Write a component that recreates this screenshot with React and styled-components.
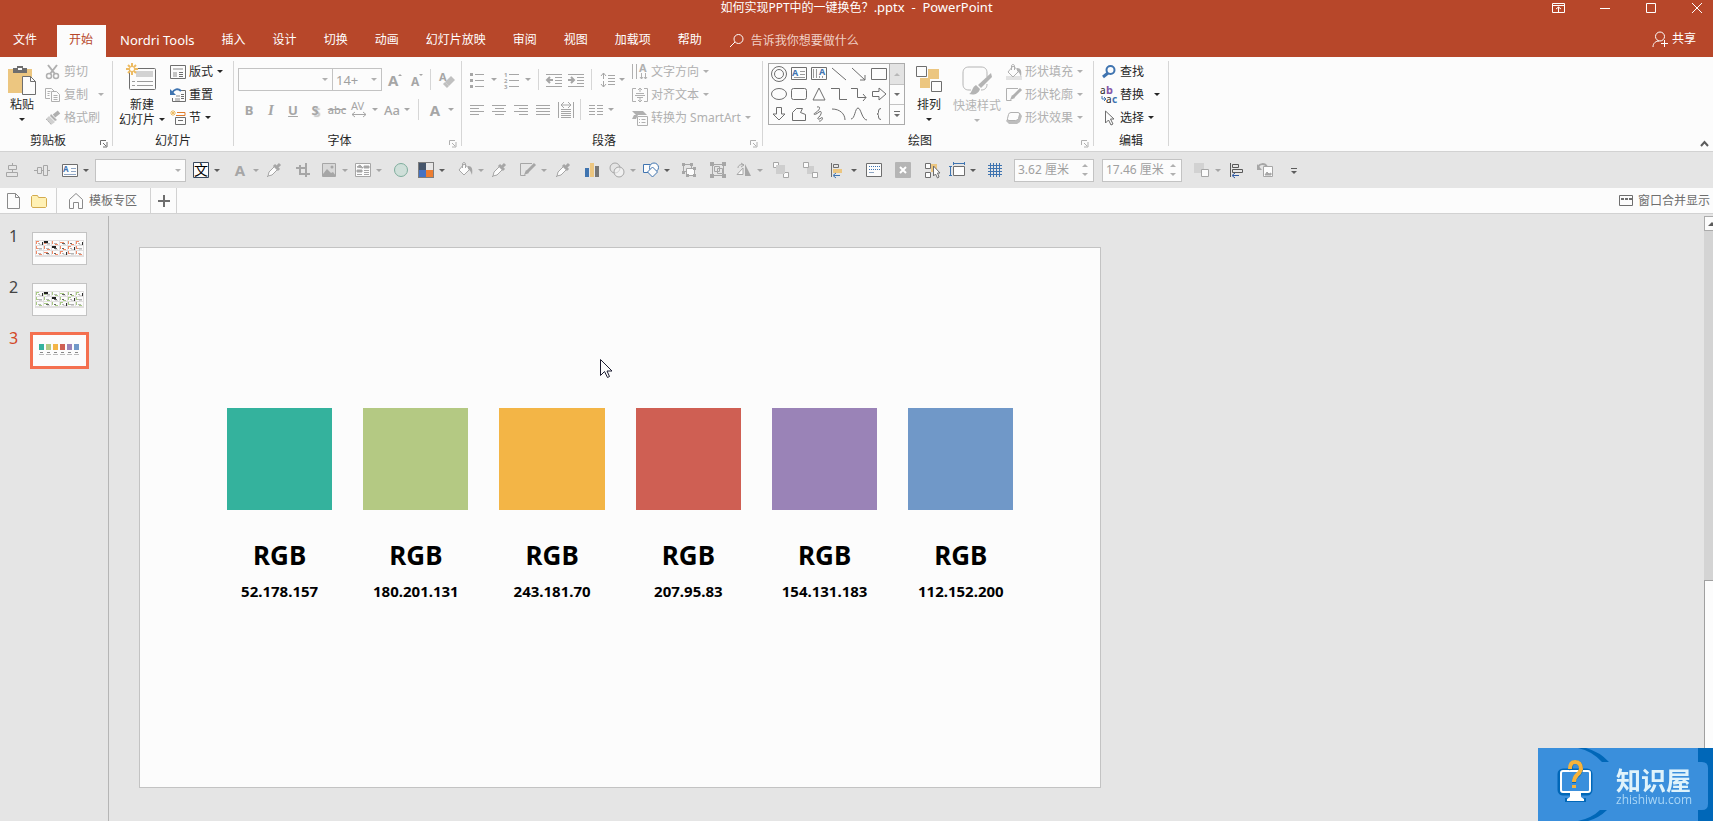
import React from 'react';
import styled, {createGlobalStyle} from 'styled-components';

const GlobalStyle = createGlobalStyle`
*{box-sizing:border-box;}
body{
    margin:0;
    overflow:hidden;
    background:#e5e5e5;
    font-family:"Noto Sans","Noto Sans CJK SC",sans-serif;
    font-size:12px;
    line-height:16px;
    color:#262626;
}
button,input,select{
    font:inherit;
    color:inherit;
    background:none;
    border:0;
    padding:0;
    margin:0;
}
svg{display:block;flex:none;overflow:visible;}
`;

/* ---------- icons ---------- */

const Icon = ({w = 16, h = 16, children}) => (
    <svg width={w} height={h} viewBox={`0 0 ${w} ${h}`} fill="none" stroke="currentColor" aria-hidden="true">{children}</svg>
);

const Caret = () => <svg width="6" height="3" viewBox="0 0 6 3" fill="currentColor" aria-hidden="true"><path d="M0 0h6L3 3z"/></svg>;

const T = ({x, y, s = 8, b = true, fill = 'currentColor', children}) => (
    <text x={x} y={y} fontSize={s} fontWeight={b ? 700 : 400} fill={fill} stroke="none">{children}</text>
);

const blue = '#3f74b0';
const sand = '#ecc680';
const line = '#6e6e6e';

const Star = () => <path d="M6 0v12M0 6h12M2 2l8 8M10 2l-8 8" stroke="#edbb62" strokeWidth="2"/>;

const PasteIcon = () => (
    <Icon w={29} h={31}>
        <path d="M0 4h24v24H0z" fill={sand} stroke="none"/>
        <path d="M5 3h4V1h6v2h4v5H5z" fill="#6e6e6e" stroke="none"/>
        <path d="M10 3h4v2h-4z" fill="#fcfcfc" stroke="none"/>
        <path d="M14.500 11.500h8l5 5v13h-13z" fill="#fcfcfc" stroke={line}/>
        <path d="M22.500 11.500v5h5" stroke={line}/>
    </Icon>
);
const CutIcon = () => (
    <Icon>
        <path d="M3 1l7 9M12 1L5 10" strokeWidth="2"/>
        <circle cx="4" cy="12" r="2.500" strokeWidth="1.500"/><circle cx="11" cy="12" r="2.500" strokeWidth="1.500"/>
    </Icon>
);
const CopyIcon = () => (
    <Icon>
        <path d="M5 11.500H.500v-10h6l3 3" /><path d="M2.500 4.500h3M2.500 6.500h2M2.500 8.500h2"/>
        <path d="M6.500 4.500h5l3 3v7h-8z"/><path d="M8.500 8.500h4M8.500 10.500h4M8.500 12.500h4"/>
    </Icon>
);
const BrushIcon = () => (
    <Icon>
        <path d="M14 2l-5 4" strokeWidth="4"/>
        <path d="M6 4l6 6-2 1-5-5z" fill="currentColor" stroke="none"/>
        <path d="M4 6l6 6-4 3-5-6z" fill="#d0d0d0" stroke="none"/>
        <path d="M1 9l5 5" strokeDasharray="2 1"/>
    </Icon>
);
const NewSlideIcon = () => (
    <Icon w={32} h={28}>
        <rect x="3.500" y="5.500" width="26" height="21" rx="1" fill="#fcfcfc" stroke={line}/>
        <path d="M10 8h17v6H10z" fill="#d2d2d2" stroke="none"/>
        <path d="M6 18.500h3M11 18.500h16M6 22.500h3M11 22.500h16" stroke="#9b9b9b"/>
        <Star/>
        <circle cx="6" cy="6" r="2" fill="#fff" stroke="none"/>
    </Icon>
);
const LayoutIcon = () => (
    <Icon>
        <path d="M.500 1.500h15v13H.500z" stroke={line}/>
        <path d="M3 4h10v2H3zM3 8h4v5H3z" fill="#c4c4c4" stroke="none"/>
        <path d="M9 8.500h4M9 10.500h4M9 12.500h4" stroke={line}/>
    </Icon>
);
const ResetIcon = () => (
    <Icon>
        <path d="M10 3.500h5.500v11h-13V11" stroke={line}/>
        <path d="M6 8h4v2H6zM5 11h5v3H5z" fill="#c4c4c4" stroke="none"/>
        <path d="M11 7.500h3M11 9.500h3M11 11.500h3" stroke={line}/>
        <path d="M2 6c2-4 6-5 9-2" stroke={blue} strokeWidth="2"/>
        <path d="M0 2v6h6z" fill={blue} stroke="none"/>
    </Icon>
);
const SectionIcon = () => (
    <Icon>
        <path d="M3 0v6M0 3h6M1 1l4 4M5 1L1 5" stroke="#edbb62"/>
        <path d="M7 2.500h8v3M6 5.500h9" stroke="#e07c2c"/>
        <path d="M5.500 7.500h10v7h-10z" stroke={line}/><path d="M8 10.500h5" stroke={line}/>
    </Icon>
);
const EraserIcon = () => (
    <Icon>
        <T x="0" y="9" s={11}>A</T>
        <path d="M6 10l6-6 4 4-6 6z" fill="#c0c0c0" stroke="none"/>
        <path d="M5 11l4 4" strokeWidth="3" stroke="#c0c0c0"/>
    </Icon>
);
const SpacingAV = () => (
    <Icon>
        <T x="0" y="8" s={11} b={false}>AV</T>
        <path d="M1 12.500h14M4 10l-3 2.500L4 15M12 10l3 2.500-3 2.500"/>
    </Icon>
);
const Bullets = () => (
    <Icon>
        <path d="M5 2.500h9M5 8.500h9M5 14.500h9"/>
        <path d="M0 1h3v3H0zM0 7h3v3H0zM0 13h3v3H0z" fill="currentColor" stroke="none"/>
    </Icon>
);
const Numbers = () => (
    <Icon>
        <path d="M5 2.500h10M5 8.500h10M5 14.500h10"/>
        <T x="0" y="5" s={6}>1</T><T x="0" y="11" s={6}>2</T><T x="0" y="17" s={6}>3</T>
    </Icon>
);
const Indent = ({out}) => (
    <Icon>
        <path d="M0 2.500h16M9 5.500h7M9 8.500h7M9 11.500h7M0 14.500h16"/>
        <path d={out ? 'M1 8h6M4 5L1 8l3 3' : 'M0 8h6M3 5l3 3-3 3'} strokeWidth="2"/>
    </Icon>
);
const LineSpacing = () => (
    <Icon>
        <path d="M3.500 1v6M1 4l2.500-3L6 4M3.500 9v6M1 12l2.500 3L6 12M8 3.500h7M8 6.500h7M8 9.500h7M8 12.500h7"/>
    </Icon>
);
const Align = ({d}) => <Icon><path d={d}/></Icon>;
const Distribute = () => (
    <Icon>
        <path d="M.500 0v16M15.500 0v16M3 7.500h10M3 9.500h10M3 11.500h10M3 13.500h10M3 15.500h10M3 3h10M6 0L3 3l3 3M10 0l3 3-3 3"/>
    </Icon>
);
const Columns = () => <Icon><path d="M0 3.500h6M8 3.500h6M0 6.500h6M8 6.500h6M0 9.500h6M8 9.500h6M0 12.500h6M8 12.500h6"/></Icon>;
const TextDir = () => (
    <Icon>
        <path d="M.500 0v15M4.500 0v15M9.500 9v6M13.500 9v6M8 13l1.500 2 1.500-2M12 13l1.500 2 1.500-2"/>
        <T x="7" y="8" s={11}>A</T>
    </Icon>
);
const AlignText = () => (
    <Icon>
        <path d="M4 1.500H.500v13H4M12 1.500h3.500v13H12M8 1v4M6 3l2-2 2 2M8 11v4M6 13l2 2 2-2M4 6.500h8M3 8.500h10M5 10.500h6"/>
    </Icon>
);
const SmartArt = () => (
    <Icon>
        <path d="M0 1h11l4 4H4zM0 9h4l2-4H2z" fill="currentColor" stroke="none"/>
        <path d="M5.500 6.500h10v9h-10z" fill="#fcfcfc"/><path d="M7 9.500h1M9.500 9.500h4M7 12.500h1M9.500 12.500h4"/>
    </Icon>
);
const ArrangeIcon = () => (
    <Icon w={28} h={28}>
        <path d="M13 4h11v10H13zM5 13h10v10H5z" fill={sand} stroke="none"/>
        <path d="M1.500 1.500h10v10h-10zM16.500 16.500h10v10h-10z" fill="#fcfcfc" stroke={line}/>
    </Icon>
);
const StyleIcon = () => (
    <Icon w={32} h={32}>
        <path d="M10 25H8c-4 0-6-2-6-6V8c0-4 2-6 6-6h12c4 0 6 2 6 6v4M26 19c0 4-2 6-6 6" strokeWidth="1" fill="none"/>
        <path d="M30 8l1 4-11 11-3-3z" fill="currentColor" stroke="none"/>
        <path d="M15 20l4 4c-2 6-7 6-11 5 3-1 3-7 7-9z" fill="currentColor" stroke="none"/>
    </Icon>
);
const Bucket = ({bar}) => (
    <Icon>
        {bar && <path d="M0 12h16v4H0z" fill="#e3e3e3" stroke="none"/>}
        <path d="M7 2l6 5-6 6-5-5z" fill="#fcfcfc"/><path d="M5.500 6V2c0-2 3-2 3 0v4"/>
        <path d="M11 4c4 0 5 3 4 9-1-3-2-5-4-6z" fill="currentColor" stroke="none"/>
    </Icon>
);
const Outline = () => (
    <Icon>
        <path d="M12 1.500H.500v12h5"/>
        <path d="M15 2l-8 8" strokeWidth="3"/><path d="M4 13l2-5 3 3z" fill="currentColor" stroke="none"/>
    </Icon>
);
const Effect = () => (
    <Icon>
        <path d="M5 3h9l2 3-2 6-3 2H3l-3-3z" fill="#bdbdbd" stroke="none"/>
        <path d="M5 2.500h7q2 0 1.500 2l-1 4q-1 2-3 2H3q-2 0-1.500-2l1-4q.500-2 2.500-2z" fill="#fcfcfc"/>
    </Icon>
);
const FindIcon = () => <Icon><circle cx="9.500" cy="6" r="4" stroke={blue} strokeWidth="2"/><path d="M7 9l-5 4" stroke={blue} strokeWidth="3"/></Icon>;
const ReplaceIcon = () => (
    <Icon>
        <T x="-1" y="7" s={10} b={false}>a</T><T x="5" y="7" s={11} fill="#8757a8">b</T>
        <T x="5" y="16" s={10} b={false}>a</T><T x="11" y="16" s={10} fill={blue}>c</T>
        <path d="M1 9v3h3M3 10l2 2-2 2" stroke={blue}/>
    </Icon>
);
const SelectIcon = () => <Icon><path d="M4.500 1v12l3-3 2.500 5 2-1-2.500-5H13z" stroke={line} fill="#fcfcfc"/></Icon>;

/* shapes of the drawing gallery */
const SHAPES = [
    <><circle cx="8" cy="8" r="7.500"/><circle cx="8" cy="8" r="4.500"/></>,
    <><path d="M.500 1.500h15v12H.500z"/><T x="1" y="10" s={9} fill={blue}>A</T><path d="M9 5.500h5M9 8.500h5M3 11.500h11" stroke="#9a9a9a"/></>,
    <><path d="M.500 1.500h15v12H.500z"/><T x="8" y="9" s={9} fill={blue}>A</T><path d="M2.500 3v9M5.500 3v9M8.500 10v2M11.500 10v2" stroke="#9a9a9a"/></>,
    <path d="M1 2l14 12"/>,
    <path d="M1 2l13 12M14 9v5H9"/>,
    <path d="M.500 2.500h15v11H.500z"/>,
    <ellipse cx="8" cy="8" rx="7.500" ry="5.500"/>,
    <rect x=".5" y="2.500" width="15" height="11" rx="2"/>,
    <path d="M8 2l6 12H2z"/>,
    <path d="M0 2.500h8.500v11H16"/>,
    <path d="M0 2.500h6.500v9H15M12 8l3 3.500-3 3.500"/>,
    <path d="M1.500 5.500H8V2l7 6-7 6v-3.500H1.500z"/>,
    <path d="M5.500 1.500h5V8H14l-6 6-6-6h3.500z"/>,
    <path d="M1.500 14.500v-8l4-4h6l-2 4 5 2v6z"/>,
    <path d="M6 1c5-1 2 4-2 6-3 2 1 2 4-1 3-2 3 2 0 5-3 2 0 3 2 1 3-2 1 4-2 3"/>,
    <path d="M1 3c8 0 13 5 13 11"/>,
    <path d="M0 13C4 13 4 2 7 2s4 12 9 12"/>,
    <path d="M10 2.500Q7.500 2.500 7.500 5v1.500Q7.500 8 6 8q1.500 0 1.500 1.500V11q0 2.500 2.500 2.500"/>,
];

/* quick access drawings */
const eyedropper = <Icon><path d="M2 14l-1 1M2 14l1-4 6-6 3 3-6 6z" fill="#fcfcfc"/><path d="M8 3l5 5M10 6l4-4" strokeWidth="3"/></Icon>;
const QA = {
    center: <Icon><path d="M8.500 1v14"/><path d="M4.500 3.500h8v4h-8zM2.500 10.500h11v4h-11z" fill="#e5e5e5"/></Icon>,
    middle: <Icon><path d="M0 8.500h16"/><path d="M3.500 5.500h4v6h-4zM9.500 3.500h4v10h-4z" fill="#e5e5e5"/></Icon>,
    textbox: <Icon><path d="M.500 2.500h15v12H.500z" stroke={line} fill="#fcfcfc"/><T x="1" y="10" s={8} fill={blue}>A</T><path d="M9 6.500h5M9 9.500h5M2 12.500h12" stroke="#8fa6c4"/></Icon>,
    wen: <Icon><path d="M.500.500h15v15H.500z" stroke="#37475c" fill="#fcfcfc"/><T x="1" y="13" s={14} b={false} fill="#000">文</T></Icon>,
    crop: <Icon><path d="M5 3v9h10M1 6h10v9M11 6V1M5 12" strokeWidth="2"/></Icon>,
    picture: <Icon><path d="M1.500 1.500h13v13h-13z" fill="#d8d8d8"/><path d="M2 12l4-5 4 4 2-1 3 4H2z" fill="currentColor" stroke="none"/><circle cx="11" cy="5" r="1.500" fill="currentColor" stroke="none"/></Icon>,
    grid2: <Icon><path d="M.500 1.500h15v13H.500z" fill="#fcfcfc"/><path d="M2 5l3-2 3 3zM9 4h5v2H9zM2 8h5v2H2z" fill="currentColor"/><path d="M9 8.500h5M9 10.500h5M2 12.500h5M9 12.500h5"/></Icon>,
    circle: <Icon><circle cx="8" cy="8" r="6.500" stroke="#7fae9d" fill="#cfdfd9"/></Icon>,
    theme: <Icon><path d="M0 0h16v16H0z" fill="#7d7d7d" stroke="none"/><path d="M1 1h7v7H1z" fill="#44546a" stroke="none"/><path d="M8 1h7v7H8z" fill="#e7e6e6" stroke="none"/><path d="M1 8h7v7H1z" fill="#4472c4" stroke="none"/><path d="M8 8h7v7H8z" fill="#ed7d31" stroke="none"/></Icon>,
    chart: <Icon><path d="M1 6h4v9H1z" fill={blue} stroke="none"/><path d="M6 1h4v14H6z" fill={sand} stroke="none"/><path d="M11 4h4v11h-4z" fill="#777" stroke="none"/></Icon>,
    merge: <Icon><circle cx="6" cy="6" r="5"/><circle cx="10" cy="10" r="5" fill="#fcfcfc" fillOpacity=".5"/></Icon>,
    shapes: <Icon><path d="M.500 2.500h8v8h-8z" stroke={blue} fill="#fcfcfc"/><circle cx="11" cy="5.500" r="4.500" stroke={blue} fill="#fcfcfc"/><path d="M9.500 5l5 5-5 5-5-5z" stroke={blue} fill="#fcfcfc"/></Icon>,
    group: <Icon><path d="M2.500 2.500h8v7h-8z"/><path d="M5.500 6.500h8v7h-8z" fill="#fcfcfc"/><path d="M1 1h3v3H1zM9 1h3v3H9zM1 9h3v3H1zM12 5h3v3h-3zM5 12h3v3H5zM12 12h3v3h-3z" fill="currentColor" stroke="none"/></Icon>,
    regroup: <Icon><path d="M2.500 2.500h11v11h-11zM4.500 4.500h5v5h-5z"/><path d="M7.500 6.500h5v5h-5z"/><path d="M0 0h4v4H0zM12 0h4v4h-4zM0 12h4v4H0zM12 12h4v4h-4z" fill="currentColor" stroke="none"/></Icon>,
    flip: <Icon><path d="M7 12.500V6l-6 6.500z" fill="#fcfcfc"/><path d="M9 2v12h6z" fill="currentColor" stroke="none"/><path d="M2 6c0-3 3-4 6-3M5 1l3 2-3 2"/></Icon>,
    forward: <Icon><path d="M.500.500h5v5h-5zM10.500 10.500h5v5h-5z" fill="#fcfcfc"/><path d="M3 3h9v9H3z" fill="#cecece" stroke="none"/></Icon>,
    backward: <Icon><path d="M5 4h7v8H5z" fill="#cecece" stroke="none"/><path d="M1.500.500h5v5h-5zM10.500 10.500h5v5h-5z" fill="#fcfcfc"/></Icon>,
    align: <Icon><path d="M1.500 1v14" stroke={line}/><path d="M3.500 2.500h5v3h-5z" stroke={line}/><path d="M3 7h9v4H3z" fill={sand} stroke="none"/><path d="M4 13.500h6M6 11l-3 2.500L6 16" stroke={blue}/></Icon>,
    pane: <Icon><path d="M.500 1.500h15v13H.500z" stroke={line} fill="#fcfcfc"/><path d="M3 4.500h11M3 7.500h11" stroke={blue} strokeDasharray="1 1"/><path d="M3 10.500h5" stroke="#8fa6c4"/></Icon>,
    close: <Icon><rect width="16" height="16" rx="1" fill="#b5b5b5" stroke="none"/><path d="M5 5l6 6M11 5l-6 6" stroke="#fff" strokeWidth="2"/></Icon>,
    pick: <Icon><path d="M7 2h6v8H7z" fill={sand} stroke="none"/><path d="M1.500 1.500h5v5h-5zM1.500 10.500h5v5h-5z" stroke={line} fill="#fcfcfc"/><path d="M9.500 4v10l2-2 2 4 1.500-1-1.500-4H16z" stroke={line} fill="#fcfcfc"/></Icon>,
    size: <Icon><path d="M4.500 4.500h11v9h-11z" stroke={line} fill="#fcfcfc"/><path d="M4 1.500h12M4.500 0v3M15.500 0v3M1.500 4v10M0 4.500h3M0 13.500h3" stroke={blue}/></Icon>,
    grid: <Icon><path d="M3.500 1v14M6.500 1v14M9.500 1v14M12.500 1v14M1 3.500h14M1 6.500h14M1 9.500h14M1 12.500h14" stroke={blue}/></Icon>,
    behind: <Icon><path d="M0 1h10v10H0z" fill="#d2d2d2" stroke="none"/><path d="M7.500 7.500h7v7h-7z" fill="#fcfcfc"/></Icon>,
    left: <Icon><path d="M1.500 1v14M3.500 2.500h6v3h-6zM3.500 7.500h10v3h-10z" stroke="#595959"/><path d="M4 13.500h6M6 11l-3 2.500L6 16" stroke="#2a56a0"/></Icon>,
    rotate: <Icon><path d="M1 6C2 1 8 1 10 5" strokeWidth="2"/><path d="M0 2v6h5z" fill="currentColor" stroke="none"/><path d="M6.500 4.500h9v10h-9z" fill="#fcfcfc"/><path d="M8 13l2-3 2 2 2-1v2z" fill="currentColor"/></Icon>,
    more: <Icon><path d="M5 6.500h6"/><path d="M5 9h6l-3 3z" fill="currentColor" stroke="none"/></Icon>,
};

/* ---------- layout ---------- */

const Page = styled.div`
display:flex;
flex-direction:column;
min-height:100vh;
`;
const Header = styled.header`
background:#b7472a;
color:#fff;
`;
const TitleBar = styled.div`
display:grid;
grid-template-columns:1fr auto 1fr;
align-items:center;
height:15px;
white-space:pre;
`;
const Title = styled.span`
grid-column:2;
line-height:14px;
`;
const Latin = styled.span`
font-size:13px;
`;
const WindowButtons = styled.div`
display:flex;
justify-content:flex-end;
gap:34px;
padding-right:10px;
`;
const TabRow = styled.nav`
display:flex;
gap:1px;
padding-top:10px;
`;
const Tab = styled.button`
height:32px;
padding:0 ${p => (p.$active ? 12 : 13)}px 2px;
min-width:${p => (p.$file ? 56 : 49)}px;
text-align:left;
white-space:nowrap;
color:${p => (p.$active ? '#b7472a' : '#fff')};
background:${p => (p.$active ? '#fcfcfc' : 'none')};
`;
const TellMe = styled.label`
display:flex;
align-items:center;
gap:6px;
flex:1;
height:32px;
padding-left:13px;
input{
    width:200px;
    outline:0;
}
input::placeholder{
    color:#f0d0c6;
    opacity:1;
}
`;
const Share = styled.button`
display:flex;
align-items:center;
gap:4px;
height:28px;
padding-right:17px;
`;
const Ribbon = styled.section`
display:flex;
align-items:flex-start;
height:95px;
padding-top:3px;
background:#fcfcfc;
border-bottom:1px solid #d2d2d2;
`;
const Divider = styled.div`
flex:none;
width:1px;
height:85px;
margin-top:1px;
background:#d6d6d6;
`;
const Panel = styled.div`
flex:0 0 ${p => p.$w}px;
height:89px;
display:flex;
flex-direction:column;
justify-content:space-between;
`;
const Tools = styled.div`
display:flex;
align-items:flex-start;
padding-left:${p => p.$pad || 0}px;
`;
const PanelLabel = styled.div`
display:flex;
align-items:center;
span{
    flex:1;
    text-align:center;
}
button{
    width:16px;
    padding-left:4px;
    color:${p => (p.$dim ? '#b0b0b0' : '#6e6e6e')};
}
`;
const BigButton = styled.button`
display:flex;
flex-direction:column;
align-items:center;
width:${p => p.$w}px;
height:70px;
padding-top:${p => p.$top || 5}px;
line-height:15px;
white-space:nowrap;
&:disabled{color:#b4b4b4;}
> svg:first-child{margin-bottom:${p => p.$mb || 4}px;}
> svg:last-child{margin-top:6px;}
`;
const WithCaret = styled.span`
display:flex;
align-items:center;
gap:4px;
`;
const Stack = styled.div`
display:flex;
flex-direction:column;
margin-left:${p => p.$ml || 0}px;
`;
const SmallButton = styled.button`
display:flex;
align-items:center;
gap:3px;
height:23px;
white-space:nowrap;
color:#262626;
&:disabled{color:#b0b0b0;}
> svg:last-child:not(:first-child){margin-left:${p => p.$gap || 1}px;}
`;
const Rows = styled.div`
display:flex;
flex-direction:column;
gap:7px;
padding-top:8px;
`;
const Row = styled.div`
display:flex;
align-items:center;
height:23px;
`;
const Bar = styled.div`
width:1px;
height:21px;
margin-right:${p => p.$mr || 8}px;
background:#d6d6d6;
`;
const Tool = styled.button`
display:flex;
flex:none;
align-items:center;
gap:${p => p.$gap || 5}px;
width:${p => p.$w}px;
height:22px;
padding-left:${p => p.$pl || 0}px;
color:#5c5c5c;
&:disabled{color:#a6a6a6;}
`;
const Letter = styled.span`
flex:none;
width:${p => (p.$w ? p.$w + 'px' : '22px')};
text-align:center;
font-size:${p => p.$size || 13}px;
font-weight:${p => (p.$thin ? 500 : 700)};
font-style:${p => (p.$italic ? 'italic' : 'normal')};
font-family:${p => (p.$italic ? '"Liberation Serif",serif' : 'inherit')};
text-decoration:${p => p.$line || 'none'};
text-shadow:${p => (p.$shadow ? '2px 2px 1px #c4c4c4' : 'none')};
`;
const Combo = styled.div`
display:grid;
align-items:center;
width:${p => p.$w}px;
height:23px;
margin:${p => p.$m || '0'};
border:1px solid #c3c3c3;
background:#fcfcfc;
color:#b0b0b0;
select{
    grid-area:1/1;
    width:100%;
    height:21px;
    padding-left:3px;
    appearance:none;
    outline:0;
    font-size:13px;
    color:#a0a0a0;
    opacity:1;
}
svg{
    grid-area:1/1;
    justify-self:end;
    margin-right:4px;
    pointer-events:none;
}
`;
const Gallery = styled.div`
display:flex;
width:137px;
height:62px;
margin-top:3px;
border:1px solid #ababab;
color:#6e6e6e;
`;
const ShapeGrid = styled.div`
display:grid;
grid-template-columns:repeat(6,20px);
grid-template-rows:repeat(3,20px);
flex:1;
button{
    display:grid;
    place-items:center;
}
`;
const GalleryScroll = styled.div`
display:grid;
grid-template-rows:repeat(3,1fr);
width:15px;
border-left:1px solid #ababab;
button{
    display:grid;
    place-items:center;
}
button + button{border-top:1px solid #c3c3c3;}
button:disabled{
    background:#e3e3e3;
    color:#b8b8b8;
}
`;
const Collapse = styled.button`
align-self:flex-end;
margin:0 4px 3px auto;
color:#5c5c5c;
`;
const QuickBar = styled.section`
display:flex;
align-items:center;
height:36px;
padding-left:4px;
background:#e5e5e5;
`;
const Spin = styled.label`
display:flex;
width:80px;
height:23px;
margin-right:${p => p.$mr || 8}px;
padding-left:3px;
border:1px solid #c3c3c3;
background:#fcfcfc;
color:#a0a0a0;
input{
    flex:1;
    min-width:0;
    outline:0;
}
span{
    display:flex;
    flex-direction:column;
    justify-content:space-around;
    padding:2px 5px 2px 3px;
    color:#b0b0b0;
}
button:first-child{transform:rotate(180deg);}
`;
const DocTabs = styled.section`
display:flex;
align-items:center;
height:26px;
background:#fcfcfc;
border-bottom:1px solid #d2d2d2;
color:#6e6e6e;
`;
const DocItem = styled.button`
display:flex;
align-items:center;
justify-content:${p => (p.$center ? 'center' : 'flex-start')};
gap:5px;
height:25px;
width:${p => (p.$w ? p.$w + 'px' : 'auto')};
padding-left:${p => p.$pl || 0}px;
border-right:${p => (p.$edge ? '1px solid #d2d2d2' : '0')};
white-space:nowrap;
`;
const MergeView = styled(DocItem)`
margin-left:auto;
padding-right:3px;
`;
const Work = styled.main`
display:flex;
flex:1;
padding-top:2px;
`;
const Thumbs = styled.ol`
display:flex;
flex-direction:column;
width:109px;
margin:0;
padding:13px 0 0;
list-style:none;
border-right:1px solid #b5b5b5;
`;
const ThumbItem = styled.li`
display:flex;
align-items:flex-start;
height:51px;
padding-left:9px;
font-size:16px;
color:${p => (p.$active ? '#d24726' : '#444')};
line-height:15px;
span{width:${p => (p.$active ? 21 : 23)}px;}
`;
const Thumb = styled.button`
display:block;
width:${p => (p.$active ? 59 : 55)}px;
height:${p => (p.$active ? 37 : 33)}px;
margin-top:${p => (p.$active ? 1 : 3)}px;
border:${p => (p.$active ? '3px solid #f4704f' : '1px solid #c3c3c3')};
background:#fcfcfc;
svg{width:100%;height:100%;}
`;
const Canvas = styled.div`
flex:1;
display:grid;
grid-template-columns:8fr 5fr;
align-items:start;
padding:31px 1px 0 30px;
`;
const Slide = styled.article`
aspect-ratio:16/9;
padding:160px 87px 0;
border:1px solid #c3c3c3;
background:#fcfcfc;
`;
const Swatches = styled.div`
display:grid;
grid-template-columns:repeat(6,1fr);
gap:31px;
`;
const Swatch = styled.figure`
margin:0;
text-align:center;
color:#000;
font-weight:700;
div{
    height:102px;
    background:rgb(${p => p.$rgb});
}
h2{
    margin:29px 0 0;
    font-size:26px;
    line-height:32px;
}
figcaption{
    margin:10px -10px 0;
    font-size:15px;
    line-height:20px;
}
`;
const Scroll = styled.div`
display:flex;
flex-direction:column;
width:9px;
background:#d4d4d4;
button{
    height:15px;
    overflow:hidden;
    padding-left:3px;
    border:1px solid #ababab;
    border-right:0;
    background:#fcfcfc;
    color:#5c5c5c;
}
div{
    flex:1;
    margin-top:349px;
    border:1px solid #a0a0a0;
    border-width:1px 0 0 1px;
    background:#fcfcfc;
}
`;
const Pointer = styled.div`
position:fixed;
left:599px;
top:358px;
color:#1c1c30;
`;
const Mark = styled.aside`
position:fixed;
right:0;
bottom:0;
display:grid;
width:175px;
height:73px;
> *{grid-area:1/1;}
`;
const MarkText = styled.div`
display:flex;
flex-direction:column;
padding:18px 0 0 78px;
color:#dff3fb;
font-size:25px;
line-height:28px;
font-weight:700;
small{
    font-family:"Open Sans",sans-serif;
    font-size:12px;
    line-height:12px;
    font-weight:400;
    color:#a9d6f6;
}
`;

/* ---------- data ---------- */

const tabs = ['插入', '设计', '切换', '动画', '幻灯片放映', '审阅', '视图', '加载项', '帮助'];
const colors = ['52.178.157', '180.201.131', '243.181.70', '207.95.83', '154.131.183', '112.152.200'];

// [icon, cell width, arrow, disabled, name]
const quickLeft = [
    [QA.center, 30, false, true, '水平居中'],
    [QA.middle, 28, false, true, '垂直居中'],
    [QA.textbox, 33, true, false, '文本框'],
];
const quickMid = [
    [QA.wen, 39, true, false, '文字'],
    ['A', 34, true, true, '字体颜色'],
    [eyedropper, 29, false, true, '取色器'],
    [QA.crop, 26, false, true, '裁剪'],
    [QA.picture, 34, true, true, '图片'],
    [QA.grid2, 38, true, true, '图片版式'],
    [QA.circle, 25, false, false, '椭圆'],
    [QA.theme, 39, true, false, '主题颜色'],
    [<Bucket/>, 34, true, true, '填充'],
    [eyedropper, 29, false, true, '填充取色'],
    [<Outline/>, 35, true, true, '轮廓'],
    [eyedropper, 29, false, true, '轮廓取色'],
    [QA.chart, 25, false, false, '图表'],
    [QA.merge, 34, true, true, '合并形状'],
    [QA.shapes, 38, true, false, '形状'],
    [QA.group, 29, false, true, '组合'],
    [QA.regroup, 26, false, true, '取消组合'],
    [QA.flip, 37, true, true, '旋转'],
    [QA.forward, 29, false, true, '上移'],
    [QA.backward, 28, false, true, '下移'],
    [QA.align, 36, true, false, '对齐'],
    [QA.pane, 29, false, false, '选择窗格'],
    [QA.close, 29, false, true, '删除'],
    [QA.pick, 25, false, false, '选择对象'],
    [QA.size, 38, true, false, '大小'],
    [QA.grid, 27, false, false, '网格线'],
];
const quickRight = [
    [QA.behind, 35, true, true, '置于底层'],
    [QA.left, 28, false, false, '左对齐'],
    [QA.rotate, 29, false, true, '更改图片'],
    [QA.more, 16, false, false, '自定义'],
];

const QuickTools = ({items}) => items.map(([icon, w, arrow, off, name]) => (
    <Tool key={name} $w={w} disabled={off} aria-label={name}>
        {icon === 'A' ? <Letter $w={16} $size={15}>A</Letter> : icon}
        {arrow && <Caret/>}
    </Tool>
));

const Small = ({icon, children, arrow, off, gap}) => (
    <SmallButton disabled={off} $gap={gap}>{icon}{children}{arrow && <Caret/>}</SmallButton>
);

const Group = ({label, w, pad, launcher, dim, children}) => (
    <>
        <Panel $w={w}>
            <Tools $pad={pad}>{children}</Tools>
            <PanelLabel $dim={dim}>
                <span>{label}</span>
                {launcher && (
                    <button aria-label={label + '设置'}>
                        <svg width="8" height="16" viewBox="0 0 8 16" fill="none" stroke="currentColor"><path d="M.500 12V7.500H6M3 10l3 3M7 9v5H3"/></svg>
                    </button>
                )}
            </PanelLabel>
        </Panel>
        <Divider/>
    </>
);

/* contact sheet of tiny slides: 6 columns, 3 rows */
const MiniSheet = ({tint}) => (
    <svg viewBox="0 0 53 31" shapeRendering="crispEdges" aria-hidden="true">
        <path d="M2 7h49v17H2z" fill="#e2e0e0"/>
        {Array.from({length: 18}, (_, i) => {
            const x = 3 + (i % 6) * 8, y = 8 + Math.floor(i / 6) * 5;
            const k = (i * 7) % 5;
            return (
                <g key={i}>
                    <path d={`M${x} ${y}h7v4h-7z`} fill="#fcfcfc"/>
                    {k < 3 && <path d={`M${x} ${y + k}h${3 + k}v1h-${3 + k}z`} fill={tint}/>}
                    {k !== 1 && <path d={`M${x} ${y}h1v3h-1z`} fill={tint}/>}
                    <path d={`M${x + 2} ${y + 2}h${2 + k % 3}v1h-${2 + k % 3}z`} fill={k % 2 ? '#666' : '#b4b4b4'}/>
                    <path d={`M${x + 3} ${y + 3}h3v1h-3z`} fill={k > 2 ? tint : '#d4d4d4'}/>
                    {(i === 1 || i === 8) && <path d={`M${x} ${y}h4v2h-4z`} fill="#222"/>}
                    {i % 5 === 0 && <path d={`M${x + 6} ${y + 1}h1v3h-1z`} fill="#333"/>}
                </g>
            );
        })}
    </svg>
);
const MiniPalette = () => (
    <svg viewBox="0 0 53 31" shapeRendering="crispEdges" aria-hidden="true">
        {colors.map((c, i) => (
            <g key={c}>
                <rect x={6 + i * 7} y="9" width="5" height="6" fill={`rgb(${c.split('.')})`}/>
                <path d={`M${7 + i * 7} 17h3v1h-3z`} fill="#888"/>
                <path d={`M${6 + i * 7} 19h5v1h-5z`} fill="#bbb"/>
            </g>
        ))}
    </svg>
);

const App = () => {
    return (
<Page>
<GlobalStyle/>
<Header>
    <TitleBar>
        <Title>如何实现PPT中的一键换色？<Latin>.pptx  -  PowerPoint</Latin></Title>
        <WindowButtons>
            <button aria-label="功能区显示选项"><Icon w={13} h={12}><path d="M.500 1.500h12v9H.500zM0 3.500h12M6.500 10V5M4 7l2.500-2L9 7"/></Icon></button>
            <button aria-label="最小化"><Icon w={12} h={12}><path d="M1 6.500h10"/></Icon></button>
            <button aria-label="最大化"><Icon w={12} h={12}><path d="M1.500 1.500h9v9h-9z"/></Icon></button>
            <button aria-label="关闭"><Icon w={12} h={12}><path d="M1 1l10 10M11 1L1 11"/></Icon></button>
        </WindowButtons>
    </TitleBar>
    <TabRow>
        <Tab $file>文件</Tab>
        <Tab $active>开始</Tab>
        <Tab><Latin>Nordri Tools</Latin></Tab>
        {tabs.map(t => <Tab key={t}>{t}</Tab>)}
        <TellMe>
            <Icon><circle cx="9.500" cy="6" r="4.500"/><path d="M6 9l-5 5"/></Icon>
            <input aria-label="操作说明搜索" placeholder="告诉我你想要做什么"/>
        </TellMe>
        <Share>
            <Icon><circle cx="8" cy="5.500" r="4.500"/><path d="M1 16c0-4 3-6 6-6M9 12.500h7M12.500 9v7"/></Icon>
            共享
        </Share>
    </TabRow>
</Header>

<Ribbon>
    <Group label="剪贴板" w={112} launcher>
        <BigButton $w={44} $mb={1}><PasteIcon/><span>粘贴</span><Caret/></BigButton>
        <Stack $ml={1}>
            <Small off icon={<CutIcon/>}>剪切</Small>
            <Small off arrow gap={7} icon={<CopyIcon/>}>复制</Small>
            <Small off icon={<BrushIcon/>}>格式刷</Small>
        </Stack>
    </Group>
    <Group label="幻灯片" w={120} pad={4}>
        <BigButton $w={50} $top={3} $mb={6}>
            <NewSlideIcon/>
            <span>新建</span>
            <WithCaret>幻灯片<Caret/></WithCaret>
        </BigButton>
        <Stack $ml={3}>
            <Small arrow icon={<LayoutIcon/>}>版式</Small>
            <Small icon={<ResetIcon/>}>重置</Small>
            <Small arrow icon={<SectionIcon/>}>节</Small>
        </Stack>
    </Group>
    <Group label="字体" w={227} pad={4} launcher dim>
        <Rows>
            <Row>
                <Combo $w={95}><select aria-label="字体" defaultValue=""><option value=""></option></select><Caret/></Combo>
                <Combo $w={50} $m="0 6px 0 -1px"><select aria-label="字号"><option>14+</option></select><Caret/></Combo>
                <Tool $w={22} disabled aria-label="增大字号"><Icon><T x="0" y="14" s={15}>A</T><path d="M10 4l2-2 2 2z" fill="currentColor" stroke="none"/></Icon></Tool>
                <Tool $w={20} disabled aria-label="减小字号"><Icon><T x="1" y="14" s={12}>A</T><path d="M9 2h4l-2 2z" fill="currentColor" stroke="none"/></Icon></Tool>
                <Bar/>
                <Tool $w={16} disabled aria-label="清除格式"><EraserIcon/></Tool>
            </Row>
            <Row>
                <Tool $w={22} disabled><Letter>B</Letter></Tool>
                <Tool $w={22} disabled><Letter $italic $size={15}>I</Letter></Tool>
                <Tool $w={22} disabled><Letter $line="underline">U</Letter></Tool>
                <Tool $w={22} disabled><Letter $shadow>S</Letter></Tool>
                <Tool $w={22} disabled><Letter $thin $size={11} $line="line-through">abc</Letter></Tool>
                <Tool $w={33} $pl={3} disabled aria-label="字符间距"><SpacingAV/><Caret/></Tool>
                <Tool $w={37} $pl={3} $gap={4} disabled><Letter $thin $w={16}>Aa</Letter><Caret/></Tool>
                <Bar/>
                <Tool $w={30} disabled><Letter $w={16} $size={15}>A</Letter><Caret/></Tool>
            </Row>
        </Rows>
    </Group>
    <Group label="段落" w={300} pad={8} launcher dim>
        <Rows>
            <Row>
                <Tool $w={34} disabled aria-label="项目符号"><Bullets/><Caret/></Tool>
                <Tool $w={34} disabled aria-label="编号"><Numbers/><Caret/></Tool>
                <Bar $mr={7}/>
                <Tool $w={22} disabled aria-label="降低列表级别"><Indent out/></Tool>
                <Tool $w={23} disabled aria-label="提高列表级别"><Indent/></Tool>
                <Bar/>
                <Tool $w={27} $gap={3} disabled aria-label="行距"><LineSpacing/><Caret/></Tool>
            </Row>
            <Row>
                <Tool $w={22} disabled aria-label="左对齐"><Align d="M0 3.500h14M0 6.500h9M0 9.500h14M0 12.500h9"/></Tool>
                <Tool $w={22} disabled aria-label="居中"><Align d="M0 3.500h14M3 6.500h9M0 9.500h14M3 12.500h9"/></Tool>
                <Tool $w={22} disabled aria-label="右对齐"><Align d="M0 3.500h14M5 6.500h9M0 9.500h14M5 12.500h9"/></Tool>
                <Tool $w={22} disabled aria-label="两端对齐"><Align d="M0 3.500h14M0 6.500h14M0 9.500h14M0 12.500h14"/></Tool>
                <Tool $w={22} disabled aria-label="分散对齐"><Distribute/></Tool>
                <Bar/>
                <Tool $w={27} $gap={3} disabled aria-label="分栏"><Columns/><Caret/></Tool>
            </Row>
        </Rows>
        <Stack $ml={5}>
            <Small off arrow icon={<TextDir/>}>文字方向</Small>
            <Small off arrow icon={<AlignText/>}>对齐文本</Small>
            <Small off arrow icon={<SmartArt/>}>转换为 SmartArt</Small>
        </Stack>
    </Group>
    <Group label="绘图" w={330} pad={5} launcher dim>
        <Gallery>
            <ShapeGrid>
                {SHAPES.map((s, i) => <button key={i} aria-label={'形状 ' + (i + 1)}><Icon>{s}</Icon></button>)}
            </ShapeGrid>
            <GalleryScroll>
                <button disabled aria-label="上一行"><svg width="6" height="3" viewBox="0 0 6 3" fill="currentColor"><path d="M3 0l3 3H0z"/></svg></button>
                <button aria-label="下一行"><Caret/></button>
                <button aria-label="更多形状"><svg width="6" height="7" viewBox="0 0 6 7" fill="currentColor"><path d="M0 0h6v1H0zM0 3h6L3 6z"/></svg></button>
            </GalleryScroll>
        </Gallery>
        <BigButton $w={48}><ArrangeIcon/><span>排列</span><Caret/></BigButton>
        <BigButton $w={48} disabled $mb={1}><StyleIcon/><span>快速样式</span><Caret/></BigButton>
        <Stack $ml={5}>
            <Small off arrow icon={<Bucket bar/>}>形状填充</Small>
            <Small off arrow icon={<Outline/>}>形状轮廓</Small>
            <Small off arrow icon={<Effect/>}>形状效果</Small>
        </Stack>
    </Group>
    <Group label="编辑" w={74} pad={7}>
        <Stack>
            <Small icon={<FindIcon/>}>查找</Small>
            <Small arrow gap={7} icon={<ReplaceIcon/>}>替换</Small>
            <Small arrow icon={<SelectIcon/>}>选择</Small>
        </Stack>
    </Group>
    <Collapse aria-label="折叠功能区"><Icon w={9} h={8}><path d="M1 6l3.500-4L8 6" strokeWidth="2"/></Icon></Collapse>
</Ribbon>

<QuickBar>
    <QuickTools items={quickLeft}/>
    <Combo $w={91} $m="0 7px 0 0"><select aria-label="文本样式" defaultValue=""><option value=""></option></select><Caret/></Combo>
    <QuickTools items={quickMid}/>
    <Spin>
        <input aria-label="高度" defaultValue="3.62 厘米"/>
        <span><button aria-label="增加高度"><Caret/></button><button aria-label="减小高度"><Caret/></button></span>
    </Spin>
    <Spin $mr={12}>
        <input aria-label="宽度" defaultValue="17.46 厘米"/>
        <span><button aria-label="增加宽度"><Caret/></button><button aria-label="减小宽度"><Caret/></button></span>
    </Spin>
    <QuickTools items={quickRight}/>
</QuickBar>

<DocTabs>
    <DocItem $w={30} $pl={7} aria-label="新建"><Icon w={14}><path d="M.500.500h8l4 4v11H.500zM8.500.500v4h4" stroke="#8a8a8a"/></Icon></DocItem>
    <DocItem $w={27} $pl={1} $edge aria-label="打开"><Icon w={17}><path d="M.500 13V3.500l1-1h5l1 2h7l1 1v8l-1 1h-13z" fill="#fff1b5" stroke="#d3ab4f"/></Icon></DocItem>
    <DocItem $w={94} $pl={11} $edge>
        <Icon><path d="M1.500 6.500L8 .500l6.500 6v9h-4v-6h-5v6h-4z" stroke="#8a8a8a"/></Icon>
        模板专区
    </DocItem>
    <DocItem $w={26} $edge $center aria-label="新标签"><Icon w={12} h={12}><path d="M6 0v12M0 6h12" strokeWidth="2"/></Icon></DocItem>
    <MergeView>
        <Icon w={14} h={12}><path d="M.500.500h13v10H.500z"/><path d="M2 4h3M6 4h3M10 4h3" strokeWidth="2"/></Icon>
        窗口合并显示
    </MergeView>
</DocTabs>

<Work>
    <Thumbs>
        <ThumbItem><span>1</span><Thumb aria-label="幻灯片 1"><MiniSheet tint="#f08a68"/></Thumb></ThumbItem>
        <ThumbItem><span>2</span><Thumb aria-label="幻灯片 2"><MiniSheet tint="#a9cb85"/></Thumb></ThumbItem>
        <ThumbItem $active><span>3</span><Thumb $active aria-label="幻灯片 3"><MiniPalette/></Thumb></ThumbItem>
    </Thumbs>
    <Canvas>
        <Slide>
            <Swatches>
                {colors.map(c => (
                    <Swatch key={c} $rgb={c.split('.').join(',')}>
                        <div/>
                        <h2>RGB</h2>
                        <figcaption>{c}</figcaption>
                    </Swatch>
                ))}
            </Swatches>
        </Slide>
    </Canvas>
    <Scroll>
        <button aria-label="向上滚动"><svg width="8" height="4" viewBox="0 0 8 4" fill="currentColor"><path d="M4 0l4 4H0z"/></svg></button>
        <div/>
    </Scroll>
</Work>

<Pointer><Icon w={14} h={21}><path d="M1.500 1.500v16l4-4 3 6 2-1-2.500-5.500h5z" fill="#fcfcfc"/></Icon></Pointer>

<Mark>
    <svg width="175" height="73" viewBox="0 0 175 73" aria-hidden="true">
        <path d="M0 0h175v73H0z" fill="#3a8fdc"/>
        <path d="M160 0h15v73h-15v-11h4q6 0 6-6V20q0-6-6-6h-4z" fill="#0067b8"/>
        <path d="M40 0h8q14 4 23 14h-7Q54 3 40 0zM62 62h7q-8 8-19 11h-10q14-3 22-11z" fill="#0067b8"/>
        <rect x="22" y="23" width="30" height="22" rx="3" fill="none" stroke="#0067b8" strokeWidth="5"/>
        <path d="M33 45h9v6h5v2H28v-2h5z" fill="#fff" stroke="#0067b8" strokeWidth="2"/>
        <rect x="23" y="23" width="29" height="21" rx="2" fill="#3a8fdc" stroke="#fff" strokeWidth="2"/>
        <path d="M32 44h11v5l3 2v2H29v-2l3-2z" fill="#fff"/>
        <path d="M33 22q-1-8 5-8 6 1 5 8-1 4-5 7-2 2-2 6" fill="none" stroke="#0067b8" strokeWidth="4"/>
        <path d="M32 21q0-7 5-7 6 0 6 7-1 4-4 6-3 3-3 7M36 37v3" fill="none" stroke="#f6b33c" strokeWidth="4"/>
    </svg>
    <MarkText>知识屋<small>zhishiwu.com</small></MarkText>
</Mark>
</Page>
    );
}

export default App;
